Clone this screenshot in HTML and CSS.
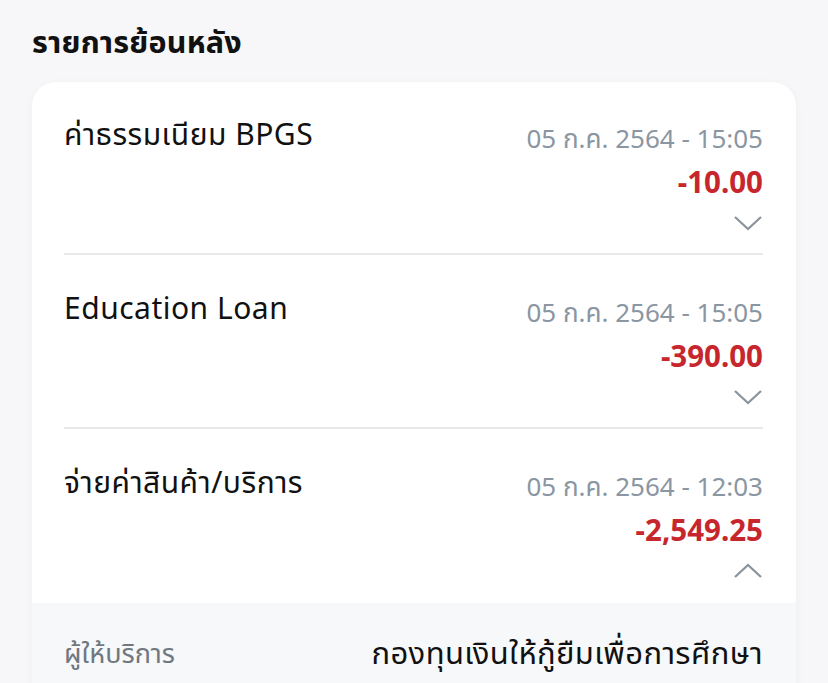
FILE: index.html
```html
<!DOCTYPE html>
<html lang="th">
<head>
    <meta charset="UTF-8">
    <meta name="viewport" content="width=device-width, initial-scale=1.0">
    <title>รายการย้อนหลัง</title>
    <link rel="stylesheet" href="styles.css">
</head>
<body>
    <h2 class="section-title">รายการย้อนหลัง</h2>

    <div class="card">
        <div class="item">
            <div class="item-name">ค่าธรรมเนียม BPGS</div>
            <div class="item-side">
                <div class="item-date">05 ก.ค. 2564 - 15:05</div>
                <div class="item-amount">-10.00</div>
                <svg class="chevron" width="28" height="16" viewBox="0 0 28 16">
                    <polyline points="1,2 14,14 27,2" fill="none" stroke="#8a939c" stroke-width="2.2"/>
                </svg>
            </div>
        </div>

        <div class="item">
            <div class="item-name">Education Loan</div>
            <div class="item-side">
                <div class="item-date">05 ก.ค. 2564 - 15:05</div>
                <div class="item-amount">-390.00</div>
                <svg class="chevron" width="28" height="16" viewBox="0 0 28 16">
                    <polyline points="1,2 14,14 27,2" fill="none" stroke="#8a939c" stroke-width="2.2"/>
                </svg>
            </div>
        </div>

        <div class="item open">
            <div class="item-name">จ่ายค่าสินค้า/บริการ</div>
            <div class="item-side">
                <div class="item-date">05 ก.ค. 2564 - 12:03</div>
                <div class="item-amount">-2,549.25</div>
                <svg class="chevron" width="28" height="16" viewBox="0 0 28 16">
                    <polyline points="1,14 14,2 27,14" fill="none" stroke="#8a939c" stroke-width="2.2"/>
                </svg>
            </div>
        </div>

        <div class="details">
            <div class="detail-row">
                <span class="detail-label">ผู้ให้บริการ</span>
                <span class="detail-value">กองทุนเงินให้กู้ยืมเพื่อการศึกษา</span>
            </div>
        </div>
    </div>
</body>
</html>
```

FILE: styles.css
```css
body {
    font-family: 'Noto Sans', 'Noto Sans Thai', sans-serif;
    background: #f7f7f9;
    margin: 0;
    padding: 0 32px;
    color: #111111;
}

.section-title {
    font-size: 30.5px;
    font-weight: 700;
    line-height: 36px;
    letter-spacing: 0.2px;
    margin: 0;
    padding-top: 23px;
    padding-bottom: 23px;
}

.card {
    background: white;
    border-radius: 24px;
    box-shadow: 0 2px 10px rgba(0, 0, 0, 0.04);
    overflow: hidden;
}

.item {
    display: flex;
    justify-content: space-between;
    align-items: flex-start;
    margin: 0 33px 0 32px;
    padding: 41px 0 22px;
    border-bottom: 2px solid #e9e9eb;
}

.item:first-child {
    padding-top: 40px;
}

.item.open {
    border-bottom: none;
    padding-bottom: 24px;
}

.item-name {
    font-size: 30px;
    line-height: 32px;
    letter-spacing: 0.5px;
    margin-top: -4px;
}

.item-side {
    display: flex;
    flex-direction: column;
    align-items: flex-end;
}

.item-date {
    font-size: 26px;
    line-height: 32px;
    color: #8a96a2;
}

.item-amount {
    font-size: 29.5px;
    font-weight: 700;
    line-height: 32px;
    margin-top: 12px;
    color: #c8262d;
}

.chevron {
    display: block;
    margin-top: 17px;
    margin-right: 1px;
}

.details {
    background: #f7f8fa;
    padding: 28px 33px 40px 32px;
}

.detail-row {
    display: flex;
    justify-content: space-between;
    align-items: center;
}

.detail-label {
    font-size: 27px;
    color: #6f7780;
}

.detail-value {
    font-size: 31px;
    letter-spacing: 0.4px;
    color: #111111;
}
```
